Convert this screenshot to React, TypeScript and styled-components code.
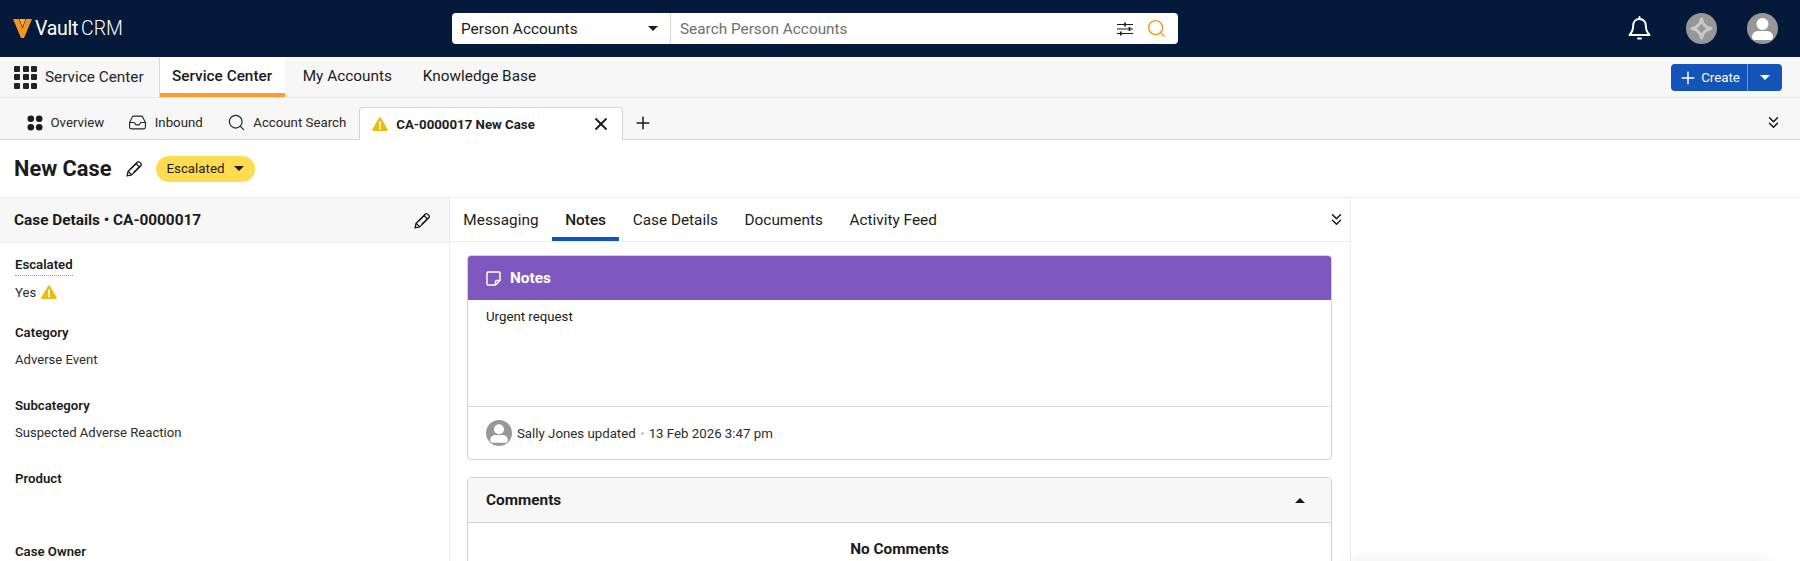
import React from 'react';
import styled, { createGlobalStyle } from 'styled-components';
import { ChevronsDown, Inbox, Plus, Search, X } from 'lucide-react';

const GlobalStyle = createGlobalStyle`
  html, body {
    margin: 0;
    padding: 0;
    height: 561px;
    overflow: hidden;
    background: #fff;
    font-family: Roboto, "Liberation Sans", sans-serif;
    color: #1b1b1b;
  }
  * { box-sizing: border-box; }
`;

const PencilIcon = ({ size = 17 }: { size?: number }) => (
  <svg width={size} height={size} viewBox="0 0 16 16" fill="none" stroke="#1b1b1b" strokeWidth="1.250" strokeLinejoin="round">
    <path d="M1 15l1-4.400L10.600 2a1.500 1.500 0 0 1 2.100 0l1.300 1.300a1.500 1.500 0 0 1 0 2.100L5.400 14z" />
    <path d="M9.300 3.300l3.400 3.400M2 10.600L5.400 14M4.200 8.800l6.400-6.400M7.200 11.800l6.400-6.400" />
  </svg>
);

const WarningIcon = ({ size = 16 }: { size?: number }) => (
  <svg width={size} height={size} viewBox="0 0 16 16">
    <path d="M8 1.200c.4 0 .7.2.9.5l6.800 11.800c.4.700 0 1.500-.9 1.500H1.200c-.9 0-1.300-.8-.9-1.500L7.100 1.700c.2-.3.500-.5.900-.5z" fill="#e9bc0d" />
    <rect x="7" y="5.400" width="2" height="5" rx=".5" fill="#fff" />
    <rect x="7" y="11.200" width="2" height="2" rx=".5" fill="#fff" />
  </svg>
);

const PersonAvatar = ({ size }: { size: number }) => (
  <svg width={size} height={size} viewBox="0 0 31 31">
    <circle cx="15.500" cy="15.500" r="15.500" fill="#979797" />
    <circle cx="15.500" cy="11" r="6" fill="#fff" />
    <path d="M5 24.500c0-4.500 3-6.500 6.500-6.500h8c3.500 0 6.500 2 6.500 6.500 0 1.200-.8 2-2 2.500H7c-1.200-.5-2-1.300-2-2.500z" fill="#fff" />
  </svg>
);

const BellIcon = () => (
  <svg width="23" height="25" viewBox="0 0 23 25" fill="none" stroke="#fff" strokeWidth="2" strokeLinejoin="round" strokeLinecap="round">
    <path d="M11.500 1v2" />
    <path d="M11.500 3c-3.800 0-6.300 2.900-6.300 6.600 0 5.400-1.500 7.300-3.700 9.400h20c-2.200-2.100-3.700-4-3.700-9.400C17.800 5.900 15.300 3 11.500 3z" />
    <rect x="9" y="21.600" width="5" height="2" rx="1" fill="#fff" stroke="none" />
  </svg>
);

const TopBar = styled.header`
  height: 57px;
  background: #051a3a;
  display: grid;
  grid-template-columns: 452px 726px 1fr;
  align-items: center;
`;

const Brand = styled.div`
  display: flex;
  align-items: center;
  padding-left: 13px;
  color: #fff;
  font-size: 19.500px;
`;

const BrandVault = styled.span`
  font-weight: 400;
  margin-left: 3px;
  letter-spacing: -0.3px;
`;

const BrandCrm = styled.span`
  font-weight: 300;
  margin-left: 3px;
`;

const SearchBox = styled.div`
  height: 31px;
  background: #fff;
  border-radius: 4px;
  display: flex;
  align-items: center;
`;

const SearchScope = styled.div`
  width: 219px;
  height: 100%;
  padding: 0 12px 0 9px;
  display: flex;
  align-items: center;
  justify-content: space-between;
  border-right: 1px solid #d5d5e0;
  font-size: 15.350px;
`;

const SearchPlaceholder = styled.div`
  flex: 1;
  padding-left: 9px;
  font-size: 15.350px;
  color: #6f6f6f;
`;

const SearchIcons = styled.div`
  display: flex;
  align-items: center;
  gap: 13px;
  padding-right: 11px;
`;

const Caret = styled.span<{ $up?: boolean; $color?: string }>`
  width: 0;
  height: 0;
  border-left: 5px solid transparent;
  border-right: 5px solid transparent;
  ${p => (p.$up ? 'border-bottom' : 'border-top')}: 5px solid ${p => p.$color || '#1b1b1b'};
`;

const TopIcons = styled.div`
  display: flex;
  align-items: center;
  justify-content: flex-end;
  gap: 30px;
  padding-right: 22px;
`;

const BellSlot = styled.div`
  display: flex;
  margin-right: 5px;
`;

const NavBar = styled.nav`
  height: 41px;
  background: #f7f7f7;
  border-bottom: 1px solid #e8e8e8;
  display: flex;
  align-items: stretch;
`;

const AppMenu = styled.div`
  display: flex;
  align-items: center;
  gap: 8px;
  width: 159px;
  padding-left: 14px;
  font-size: 15.350px;
  color: #262626;
`;

const Waffle = styled.div`
  display: grid;
  grid-template-columns: repeat(3, 6px);
  grid-auto-rows: 6px;
  gap: 2.500px;
`;

const WaffleDot = styled.span`
  background: #222;
  border-radius: 1px;
`;

const NavItem = styled.div<{ $active?: boolean }>`
  display: flex;
  align-items: center;
  padding: 0 ${p => (p.$active ? '13px 2px 12px' : '15.500px 2px')};
  margin-right: ${p => (p.$active ? '2px' : '0')};
  font-size: 15.350px;
  color: #1b1b1b;
  font-weight: ${p => (p.$active ? 500 : 400)};
  background: ${p => (p.$active ? '#fff' : 'transparent')};
  border-left: ${p => (p.$active ? '1px solid #d8d8d8' : 'none')};
  box-shadow: ${p => (p.$active ? 'inset 0 -4px 0 #ff9a2e' : 'none')};
`;

const CreateButton = styled.div`
  margin: 7px 18px 0 auto;
  width: 111px;
  height: 27px;
  background: #1453b8;
  border-radius: 4px;
  display: flex;
  color: #fff;
  font-size: 13.300px;
`;

const CreateLabel = styled.div`
  width: 77px;
  display: flex;
  align-items: center;
  justify-content: center;
  gap: 3px;
  border-right: 1px solid #6f97d8;
`;

const CreateCaret = styled.div`
  flex: 1;
  display: flex;
  align-items: center;
  justify-content: center;
`;

const TabBar = styled.div`
  height: 42px;
  background: #f7f7f7;
  border-bottom: 1px solid #d4d4d4;
  display: flex;
  align-items: flex-end;
  padding-left: 27px;
`;

const WorkTab = styled.div`
  height: 33px;
  display: flex;
  align-items: center;
  gap: 7.500px;
  margin-right: 24px;
  font-size: 13.250px;
  color: #262626;
`;

const OpenTab = styled.div`
  width: 264px;
  height: 33px;
  margin: 0 0 -1px -11px;
  padding: 0 11px 0 12px;
  background: #fff;
  border: 1px solid #d4d4d4;
  border-bottom: none;
  border-radius: 4px 4px 0 0;
  display: flex;
  align-items: center;
  gap: 8px;
  font-size: 13.250px;
  font-weight: 700;
`;

const OpenTabClose = styled.span`
  display: flex;
  margin-left: auto;
`;

const AddTab = styled.div`
  height: 32px;
  margin-left: 10px;
  display: flex;
  align-items: center;
`;

const TabBarEnd = styled.div`
  height: 33px;
  margin-left: auto;
  padding-right: 17px;
  display: flex;
  align-items: center;
`;

const TitleRow = styled.div`
  height: 58px;
  display: flex;
  align-items: center;
  padding: 0 14px;
  border-bottom: 1px solid #ececec;
`;

const PageTitle = styled.h1`
  margin: 0 15px 0 0;
  font-size: 21.800px;
  font-weight: 700;
`;

const StatusBadge = styled.div`
  margin-left: 13px;
  width: 99px;
  height: 26px;
  background: #ffdb4f;
  border-radius: 13px;
  display: flex;
  align-items: center;
  gap: 10px;
  padding-left: 10px;
  font-size: 13.300px;
`;

const Columns = styled.div`
  display: grid;
  grid-template-columns: 450px 901px;
  height: 363px;
  overflow: hidden;
`;

const LeftPanel = styled.aside`
  border-right: 1px solid #ececec;
  overflow: hidden;
`;

const PanelHeader = styled.div`
  height: 45px;
  background: #f7f7f7;
  border-bottom: 1px solid #ececec;
  display: flex;
  align-items: center;
  justify-content: space-between;
  padding: 0 18px 0 14px;
  font-size: 15.350px;
  font-weight: 700;
`;

const FieldList = styled.div`
  padding: 11px 15px 0;
  display: flex;
  flex-direction: column;
`;

const Field = styled.div`
  flex: none;
  height: 73px;
  &:first-child { height: 68px; }
`;

const FieldLabel = styled.div<{ $hint?: boolean }>`
  display: inline-block;
  height: 19px;
  font-size: 13.200px;
  line-height: 16px;
  font-weight: 600;
  border-bottom: ${p => (p.$hint ? '1px dotted #999' : 'none')};
`;

const FieldValue = styled.div<{ $flagged?: boolean }>`
  margin-top: ${p => (p.$flagged ? '7px' : '6px')};
  height: 18px;
  display: flex;
  align-items: center;
  gap: 5px;
  font-size: 13.100px;
  color: #2b2b2b;
`;

const MainPanel = styled.main`
  border-right: 1px solid #ececec;
  overflow: hidden;
`;

const SubTabs = styled.div`
  height: 44px;
  border-bottom: 1px solid #ececec;
  display: flex;
  align-items: stretch;
`;

const SubTab = styled.div<{ $active?: boolean }>`
  display: flex;
  align-items: center;
  padding: 0 13.350px;
  font-size: 15.350px;
  font-weight: ${p => (p.$active ? 500 : 400)};
  box-shadow: ${p => (p.$active ? 'inset 0 -4px 0 #1453b8' : 'none')};
`;

const SubTabsEnd = styled.div`
  margin-left: auto;
  padding-right: 4px;
  display: flex;
  align-items: center;
`;

const CardStack = styled.div`
  padding: 13px 18px 0 17px;
  display: flex;
  flex-direction: column;
  gap: 17px;
`;

const Card = styled.section`
  flex: none;
  border: 1px solid #d2d2d2;
  border-radius: 4px;
  overflow: hidden;
`;

const NotesHeader = styled.div`
  height: 44px;
  background: #7f58bf;
  color: #fff;
  display: flex;
  align-items: center;
  gap: 9px;
  padding-left: 18px;
  font-size: 15.350px;
  font-weight: 700;
`;

const NotesBody = styled.div`
  height: 107px;
  padding: 8px 18px;
  font-size: 13.250px;
  line-height: 18px;
  border-bottom: 1px solid #dcdcdc;
`;

const NotesFooter = styled.div`
  height: 52px;
  display: flex;
  align-items: center;
  padding-left: 18px;
  gap: 5px;
  font-size: 13.250px;
  color: #2b2b2b;
`;

const MetaDot = styled.span`
  width: 3px;
  height: 3px;
  border-radius: 50%;
  background: #c4c4c4;
`;

const CommentsHeader = styled.div`
  height: 45px;
  background: #f7f7f7;
  border-bottom: 1px solid #d2d2d2;
  display: flex;
  align-items: center;
  justify-content: space-between;
  padding: 0 26px 0 18px;
  font-size: 15.350px;
  font-weight: 700;
`;

const EmptyComments = styled.div`
  height: 90px;
  padding-top: 17px;
  text-align: center;
  font-size: 15.350px;
  font-weight: 700;
`;

const ToastGlow = styled.div`
  position: absolute;
  top: 550px;
  left: 1335px;
  width: 445px;
  height: 11px;
  background: linear-gradient(to bottom, rgba(0, 0, 0, 0), rgba(0, 0, 0, 0.035));
  mask-image: linear-gradient(to right, transparent, #000 6%, #000 94%, transparent);
`;

const Overview = () => (
  <svg width="16" height="16" viewBox="0 0 16 16" fill="#1b1b1b">
    <circle cx="3.800" cy="3.800" r="3.300" />
    <circle cx="12.200" cy="3.800" r="3.300" />
    <circle cx="3.800" cy="12.200" r="3.300" />
    <circle cx="12.200" cy="12.200" r="3.300" />
  </svg>
);

const Sliders = () => (
  <svg width="16" height="14" viewBox="0 0 16 14" stroke="#1b1b1b" strokeWidth="1.200" fill="none">
    <path d="M0 2.500h16M0 7h16M0 11.500h16" />
    <path d="M8 .5v4M12.500 5v4M3.800 9.500v4" strokeWidth="1.700" />
  </svg>
);

const NoteIcon = () => (
  <svg width="15" height="15" viewBox="0 0 15 15" fill="none" stroke="#fff" strokeWidth="1.500" strokeLinejoin="round">
    <path d="M2 1h11a1 1 0 0 1 1 1v7.500L9.500 14H2a1 1 0 0 1-1-1V2a1 1 0 0 1 1-1z" />
    <path d="M14 9.500h-3.500a1 1 0 0 0-1 1V14" />
  </svg>
);

const VaultMark = () => (
  <svg width="19" height="21" viewBox="0 0 19 21">
    <path d="M0 1h6l3.500 9.500L13 1h6l-8 19H8z" fill="#f7941e" />
    <path d="M6.500 1h6L9.500 9z" fill="#fbb040" />
  </svg>
);

const GeminiAvatar = () => (
  <svg width="31" height="31" viewBox="0 0 31 31">
    <circle cx="15.500" cy="15.500" r="15.500" fill="#979797" />
    <path d="M15.500 6c1 5.500 4 8.500 9.500 9.500-5.500 1-8.500 4-9.500 9.500-1-5.500-4-8.500-9.500-9.500 5.500-1 8.500-4 9.500-9.500z" fill="none" stroke="#c9c9c9" strokeWidth="3" strokeLinejoin="round" />
  </svg>
);

const navItems = ['My Accounts', 'Knowledge Base'];
const subTabs = ['Messaging', 'Notes', 'Case Details', 'Documents', 'Activity Feed'];

const App: React.FC = () => {
  return (
    <>
      <GlobalStyle />
      <TopBar>
        <Brand>
          <VaultMark />
          <BrandVault>Vault</BrandVault>
          <BrandCrm>CRM</BrandCrm>
        </Brand>
        <SearchBox>
          <SearchScope>
            Person Accounts
            <Caret />
          </SearchScope>
          <SearchPlaceholder>Search Person Accounts</SearchPlaceholder>
          <SearchIcons>
            <Sliders />
            <Search size={21} color="#f7941e" strokeWidth={1.6} />
          </SearchIcons>
        </SearchBox>
        <TopIcons>
          <BellSlot>
            <BellIcon />
          </BellSlot>
          <GeminiAvatar />
          <PersonAvatar size={31} />
        </TopIcons>
      </TopBar>

      <NavBar>
        <AppMenu>
          <Waffle>
            {Array.from({ length: 9 }).map((_, idx) => <WaffleDot key={idx} />)}
          </Waffle>
          Service Center
        </AppMenu>
        <NavItem $active>Service Center</NavItem>
        {navItems.map(item => <NavItem key={item}>{item}</NavItem>)}
        <CreateButton>
          <CreateLabel>
            <Plus size={20} strokeWidth={1.8} />
            Create
          </CreateLabel>
          <CreateCaret>
            <Caret $color="#fff" />
          </CreateCaret>
        </CreateButton>
      </NavBar>

      <TabBar>
        <WorkTab><Overview />Overview</WorkTab>
        <WorkTab><Inbox size={19} strokeWidth={1.4} />Inbound</WorkTab>
        <WorkTab><Search size={19} strokeWidth={1.5} />Account Search</WorkTab>
        <OpenTab>
          <WarningIcon />
          CA-0000017 New Case
          <OpenTabClose><X size={20} strokeWidth={2.2} /></OpenTabClose>
        </OpenTab>
        <AddTab><Plus size={20} strokeWidth={1.8} /></AddTab>
        <TabBarEnd><ChevronsDown size={19} strokeWidth={2} /></TabBarEnd>
      </TabBar>

      <TitleRow>
        <PageTitle>New Case</PageTitle>
        <PencilIcon />
        <StatusBadge>
          Escalated
          <Caret />
        </StatusBadge>
      </TitleRow>

      <Columns>
        <LeftPanel>
          <PanelHeader>
            Case Details • CA-0000017
            <PencilIcon />
          </PanelHeader>
          <FieldList>
            <Field>
              <FieldLabel $hint>Escalated</FieldLabel>
              <FieldValue $flagged>Yes <WarningIcon /></FieldValue>
            </Field>
            <Field>
              <FieldLabel>Category</FieldLabel>
              <FieldValue>Adverse Event</FieldValue>
            </Field>
            <Field>
              <FieldLabel>Subcategory</FieldLabel>
              <FieldValue>Suspected Adverse Reaction</FieldValue>
            </Field>
            <Field>
              <FieldLabel>Product</FieldLabel>
            </Field>
            <Field>
              <FieldLabel $hint>Case Owner</FieldLabel>
            </Field>
          </FieldList>
        </LeftPanel>

        <MainPanel>
          <SubTabs>
            {subTabs.map(tab => <SubTab key={tab} $active={tab === 'Notes'}>{tab}</SubTab>)}
            <SubTabsEnd><ChevronsDown size={19} strokeWidth={2} /></SubTabsEnd>
          </SubTabs>
          <CardStack>
            <Card>
              <NotesHeader><NoteIcon />Notes</NotesHeader>
              <NotesBody>Urgent request</NotesBody>
              <NotesFooter>
                <PersonAvatar size={26} />
                Sally Jones updated
                <MetaDot />
                13 Feb 2026 3:47 pm
              </NotesFooter>
            </Card>
            <Card>
              <CommentsHeader>
                Comments
                <Caret $up />
              </CommentsHeader>
              <EmptyComments>No Comments</EmptyComments>
            </Card>
          </CardStack>
        </MainPanel>
      </Columns>
      <ToastGlow />
    </>
  );
};

export default App;
